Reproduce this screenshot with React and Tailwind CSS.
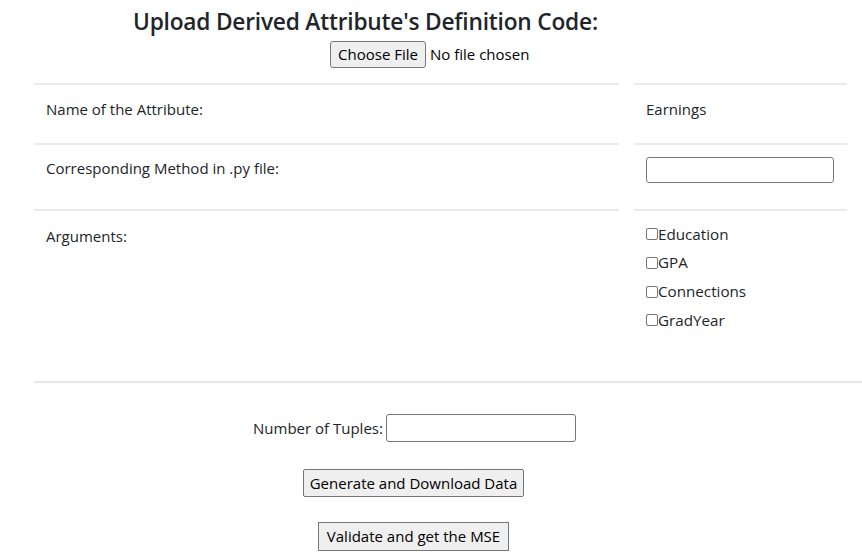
import React from "react";

const font = { fontFamily: '"Open Sans", "Noto Sans", sans-serif' };

function Check({ label }) {
  return (
    <label className="flex h-[28.7px] items-center text-[15.2px] text-[#212529]">
      <span className="h-[12px] w-[12px] rounded-[2px] border border-[#767676] bg-white" />
      <span className="leading-none">{label}</span>
    </label>
  );
}

export default function App() {
  return (
    <div className="w-[862px] h-[556px] bg-white text-[#212529] overflow-hidden" style={font}>
      <div className="pt-[7px] pl-[133px] text-[22.7px] font-semibold leading-[30px] tracking-[-0.2px] text-[#212529]">
        Upload Derived Attribute's Definition Code:
      </div>
      <div className="mt-[4px] flex items-center pl-[330px] text-[15px]">
        <button className="h-[27px] w-[96px] rounded-[3px] border border-[#767676] bg-[#efefef] text-[15px] leading-none text-black">
          Choose File
        </button>
        <span className="ml-[4px] text-black">No file chosen</span>
      </div>

      <div className="mt-[15px] ml-[34px] w-[828px] border-b-2 border-[#e6e6e6]">
        <div className="grid grid-cols-[585px_213px] gap-x-[15px] text-[15px]">
          <div className="h-[60px] border-t-2 border-[#e9ecef] px-[12px] pt-[13px] leading-[22px]">Name of the Attribute:</div>
          <div className="h-[60px] border-t-2 border-[#e9ecef] px-[12px] pt-[13px] leading-[22px]">Earnings</div>
          <div className="h-[66px] border-t-2 border-[#e9ecef] px-[12px] pt-[12px] leading-[22px]">Corresponding Method in .py file:</div>
          <div className="h-[66px] border-t-2 border-[#e9ecef] px-[12px] pt-[12px]">
            <input type="text" className="block h-[26px] w-[188px] rounded-[3px] border border-[#767676] bg-white" />
          </div>
          <div className="h-[172px] border-t-2 border-[#e9ecef] px-[12px] pt-[14px] leading-[22px]">Arguments:</div>
          <div className="h-[172px] border-t-2 border-[#e9ecef] px-[12px] pt-[9px]">
            <Check label="Education" />
            <Check label="GPA" />
            <Check label="Connections" />
            <Check label="GradYear" />
          </div>
        </div>
      </div>

      <div className="mt-[31px] flex items-center pl-[253px] text-[15px]">
        <span className="mr-[3px]">Number of Tuples:</span>
        <input type="text" className="block h-[28px] w-[190px] rounded-[3px] border border-[#767676] bg-white" />
      </div>
      <div className="mt-[27px] pl-[303px]">
        <button className="h-[28px] w-[221px] rounded-[2px] border border-[#767676] bg-[#efefef] text-[15px] leading-none text-black">
          Generate and Download Data
        </button>
      </div>
      <div className="mt-[25px] pl-[318px]">
        <button className="h-[29px] w-[191px] border border-[#767676] bg-[#efefef] text-[15px] leading-none text-black">
          Validate and get the MSE
        </button>
      </div>
    </div>
  );
}
